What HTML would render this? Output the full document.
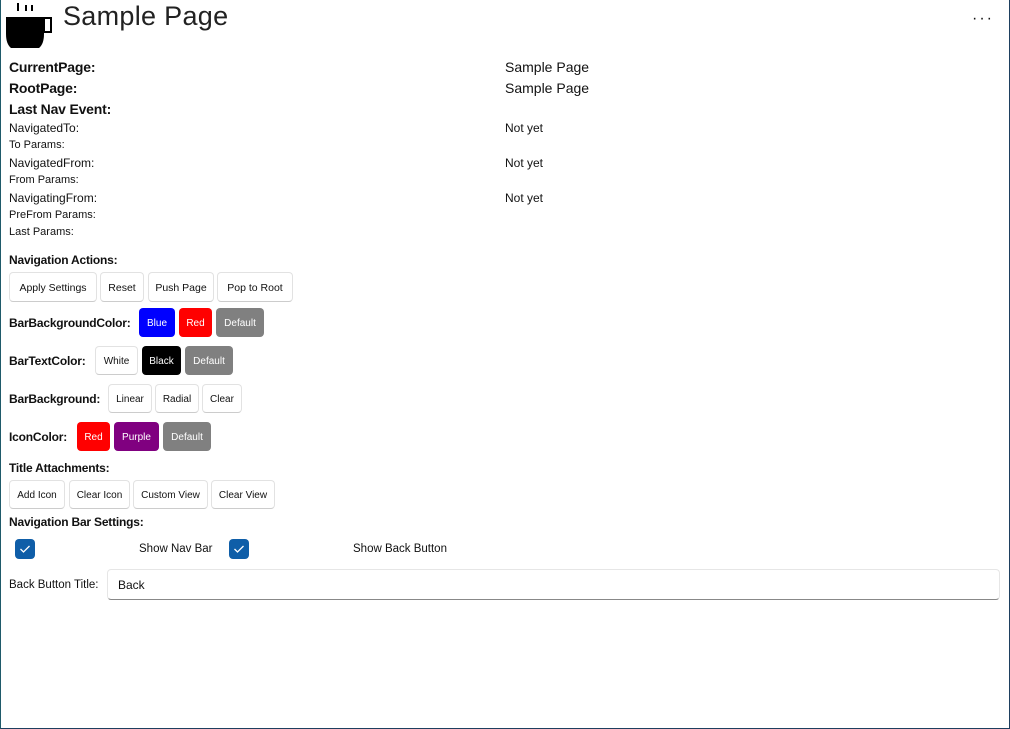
<!DOCTYPE html>
<html><head><meta charset="utf-8"><style>
*{margin:0;padding:0;box-sizing:border-box}
body{width:1010px;height:729px;background:#fff;font-family:"Liberation Sans",sans-serif;color:#111;position:relative;overflow:hidden}
#frame{position:absolute;left:0;top:0;width:1010px;height:729px;border:1px solid #1e3f5f;border-top:none;border-left-color:#1f5a6a}
.t{position:absolute;white-space:nowrap}
.b{font-weight:bold;letter-spacing:-0.2px}
.btn{position:absolute;border:1px solid #e2e2e2;border-bottom-color:#ccc;border-radius:4px;background:#fff;font-size:10.5px;display:flex;align-items:center;justify-content:center;color:#111;padding-top:2px}
.c{border:none;color:#fff}
.chk{position:absolute;width:20px;height:20px;border-radius:4px;background:#0f5ea8;display:flex;align-items:center;justify-content:center}
</style></head><body>
<div id="frame"></div>
<svg class="t" style="left:6px;top:2px" width="48" height="46" viewBox="0 0 48 46">
<rect x="11" y="1" width="2" height="8" fill="#000"/><rect x="19" y="3" width="2" height="6" fill="#000"/><rect x="25" y="3" width="2" height="6" fill="#000"/>
<path d="M0 15 H38 V32 Q38 42 33 46 H5 Q0 42 0 32 Z" fill="#000"/>
<rect x="38" y="16" width="7" height="14" fill="none" stroke="#000" stroke-width="2"/>
</svg>
<div class="t" style="left:63px;top:1px;font-size:27px;color:#222;letter-spacing:0.3px">Sample Page</div>
<div class="t" style="left:972px;top:10px;font-size:16px;letter-spacing:2px">···</div>

<div class="t b" style="left:9px;top:59px;font-size:14px">CurrentPage:</div>
<div class="t b" style="left:9px;top:80px;font-size:14px">RootPage:</div>
<div class="t b" style="left:9px;top:101px;font-size:14px">Last Nav Event:</div>
<div class="t" style="left:9px;top:121px;font-size:12px">NavigatedTo:</div>
<div class="t" style="left:9px;top:139px;font-size:11px">To Params:</div>
<div class="t" style="left:9px;top:156px;font-size:12px">NavigatedFrom:</div>
<div class="t" style="left:9px;top:174px;font-size:11px">From Params:</div>
<div class="t" style="left:9px;top:191px;font-size:12px">NavigatingFrom:</div>
<div class="t" style="left:9px;top:209px;font-size:11px">PreFrom Params:</div>
<div class="t" style="left:9px;top:226px;font-size:11px">Last Params:</div>
<div class="t" style="left:505px;top:59px;font-size:14px">Sample Page</div>
<div class="t" style="left:505px;top:80px;font-size:14px">Sample Page</div>
<div class="t" style="left:505px;top:121px;font-size:12px">Not yet</div>
<div class="t" style="left:505px;top:156px;font-size:12px">Not yet</div>
<div class="t" style="left:505px;top:191px;font-size:12px">Not yet</div>

<div class="t b" style="left:9px;top:253px;font-size:12px">Navigation Actions:</div>
<div class="btn" style="left:9px;top:272px;width:88px;height:30px">Apply Settings</div>
<div class="btn" style="left:100px;top:272px;width:44px;height:30px">Reset</div>
<div class="btn" style="left:148px;top:272px;width:66px;height:30px">Push Page</div>
<div class="btn" style="left:217px;top:272px;width:76px;height:30px">Pop to Root</div>

<div class="t b" style="left:9px;top:316px;font-size:12px">BarBackgroundColor:</div>
<div class="btn c" style="left:139px;top:308px;width:36px;height:29px;background:#00f;font-size:10px">Blue</div>
<div class="btn c" style="left:179px;top:308px;width:33px;height:29px;background:#f00;font-size:10px">Red</div>
<div class="btn c" style="left:216px;top:308px;width:48px;height:29px;background:#808080;font-size:10px">Default</div>

<div class="t b" style="left:9px;top:354px;font-size:12px">BarTextColor:</div>
<div class="btn" style="left:95px;top:346px;width:43px;height:29px;font-size:10px">White</div>
<div class="btn c" style="left:142px;top:346px;width:39px;height:29px;background:#000;font-size:10px">Black</div>
<div class="btn c" style="left:185px;top:346px;width:48px;height:29px;background:#808080;font-size:10px">Default</div>

<div class="t b" style="left:9px;top:392px;font-size:12px">BarBackground:</div>
<div class="btn" style="left:108px;top:384px;width:44px;height:29px;font-size:10px">Linear</div>
<div class="btn" style="left:155px;top:384px;width:44px;height:29px;font-size:10px">Radial</div>
<div class="btn" style="left:202px;top:384px;width:40px;height:29px;font-size:10px">Clear</div>

<div class="t b" style="left:9px;top:430px;font-size:12px">IconColor:</div>
<div class="btn c" style="left:77px;top:422px;width:33px;height:29px;background:#f00;font-size:10px">Red</div>
<div class="btn c" style="left:114px;top:422px;width:45px;height:29px;background:#800080;font-size:10px">Purple</div>
<div class="btn c" style="left:163px;top:422px;width:48px;height:29px;background:#808080;font-size:10px">Default</div>

<div class="t b" style="left:9px;top:461px;font-size:12px">Title Attachments:</div>
<div class="btn" style="left:9px;top:480px;width:56px;height:29px;font-size:10px">Add Icon</div>
<div class="btn" style="left:69px;top:480px;width:61px;height:29px;font-size:10px">Clear Icon</div>
<div class="btn" style="left:133px;top:480px;width:75px;height:29px;font-size:10px">Custom View</div>
<div class="btn" style="left:211px;top:480px;width:64px;height:29px;font-size:10px">Clear View</div>

<div class="t b" style="left:9px;top:515px;font-size:12px">Navigation Bar Settings:</div>
<div class="chk" style="left:15px;top:539px"><svg width="12" height="10" viewBox="0 0 12 10"><path d="M1.5 5 L4.5 8 L10.5 2" fill="none" stroke="#fff" stroke-width="1.3"/></svg></div>
<div class="t" style="left:139px;top:543px;font-size:11.5px">Show Nav Bar</div>
<div class="chk" style="left:229px;top:539px"><svg width="12" height="10" viewBox="0 0 12 10"><path d="M1.5 5 L4.5 8 L10.5 2" fill="none" stroke="#fff" stroke-width="1.3"/></svg></div>
<div class="t" style="left:353px;top:543px;font-size:11.5px">Show Back Button</div>

<div class="t" style="left:9px;top:579px;font-size:11.5px">Back Button Title:</div>
<div style="position:absolute;left:107px;top:569px;width:893px;height:31px;border:1px solid #e6e6e6;border-bottom:1px solid #888;border-radius:4px;font-size:12px;padding:8px 0 0 10px">Back</div>
</body></html>
